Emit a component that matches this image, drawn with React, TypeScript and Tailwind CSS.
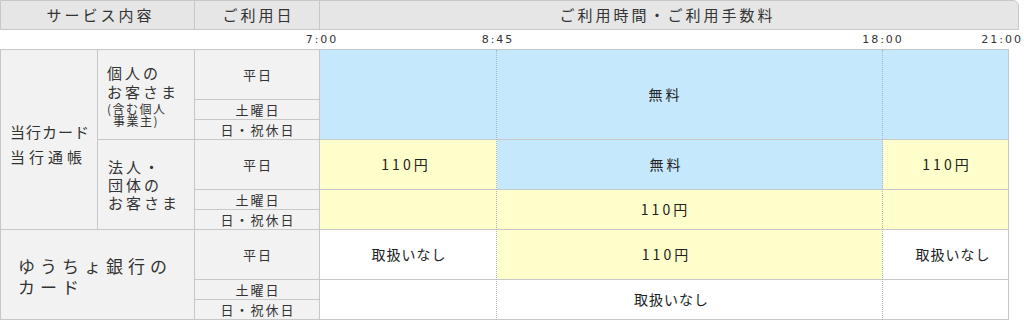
import React from 'react';

const jp = "font-['Noto_Sans_CJK_JP',sans-serif]";
const label = 'bg-[#f2f2f2] border-r border-b border-[#c8c8c8] text-[#333]';
const dayCell = `${label} flex items-center justify-center text-[13px] tracking-[2px] pl-[2px]`;
const timeCell = 'border-b border-[#c8c8c8] flex items-center justify-center text-[#222]';
const fee = 'text-[14px] tracking-[3px] pl-[3px]';
const none = 'text-[14px] tracking-[1px] pl-[1px]';

const blue = 'bg-[#c6e8fd]';
const yellow = 'bg-[#ffffcb]';

const App: React.FC = () => {
  return (
    <div className={`w-[1024px] h-[320px] bg-white overflow-hidden ${jp}`}>
      {/* header */}
      <div className="flex w-[1019px] h-[30px] bg-[#e6e6e6] border border-[#c8c8c8] rounded-tr-[6px] text-[15px] tracking-[3px] text-[#333]">
        <div className="w-[194px] border-r border-[#c8c8c8] flex items-center justify-center pl-[6px]">サービス内容</div>
        <div className="w-[125px] border-r border-[#c8c8c8] flex items-center justify-center pl-[3px]">ご利用日</div>
        <div className="flex-1 flex items-center justify-center pr-[3px]">ご利用時間・ご利用手数料</div>
      </div>

      {/* time ruler */}
      <div className="relative h-[19px] font-['DejaVu_Sans',sans-serif] text-[11px] tracking-[2px] text-[#333] leading-[19px]">
        <span className="absolute left-[322px] top-0 -translate-x-1/2">7:00</span>
        <span className="absolute left-[498px] top-0 -translate-x-1/2">8:45</span>
        <span className="absolute left-[883px] top-0 -translate-x-1/2">18:00</span>
        <span className="absolute right-[1px] top-0">21:00</span>
      </div>

      {/* body */}
      <div className="relative w-[1009px] border-t border-l border-[#c8c8c8] grid grid-cols-[97px_97px_125px_177px_386px_126px] grid-rows-[50px_20px_20px_50px_20px_20px_50px_20px_20px]">
        <div className={`${label} col-start-1 row-start-1 row-span-6 flex flex-col justify-center pl-[9px] pt-[9px] text-[15px] leading-[25px]`}>
          <span className="tracking-[1px]">当行カード</span>
          <span className="tracking-[4px]">当行通帳</span>
        </div>

        <div className={`${label} col-start-2 row-start-1 row-span-3 flex flex-col justify-center pl-[9px]`}>
          <span className="text-[15px] tracking-[3px] leading-[19px]">個人の</span>
          <span className="text-[15px] tracking-[3px] leading-[19px]">お客さま</span>
          <span className="text-[12px] tracking-[1.5px] leading-[12px] mt-[2px]">(含む個人</span>
          <span className="text-[12px] tracking-[1.5px] leading-[12px] pl-[6px]">事業主)</span>
        </div>

        <div className={`${label} col-start-2 row-start-4 row-span-3 flex flex-col justify-center pl-[10px] pt-[1px] text-[15px] tracking-[3px] leading-[18px]`}>
          <span>法人・</span>
          <span>団体の</span>
          <span>お客さま</span>
        </div>

        <div className={`${label} col-start-1 col-span-2 row-start-7 row-span-3 flex flex-col justify-center pl-[17px] pt-[2px] text-[17px] tracking-[5px] leading-[21px]`}>
          <span>ゆうちょ銀行の</span>
          <span>カード</span>
        </div>

        {/* days */}
        <div className={`${dayCell} col-start-3 row-start-1`}>平日</div>
        <div className={`${dayCell} col-start-3 row-start-2`}>土曜日</div>
        <div className={`${dayCell} col-start-3 row-start-3`}>日・祝休日</div>
        <div className={`${dayCell} col-start-3 row-start-4`}>平日</div>
        <div className={`${dayCell} col-start-3 row-start-5`}>土曜日</div>
        <div className={`${dayCell} col-start-3 row-start-6`}>日・祝休日</div>
        <div className={`${dayCell} col-start-3 row-start-7`}>平日</div>
        <div className={`${dayCell} col-start-3 row-start-8`}>土曜日</div>
        <div className={`${dayCell} col-start-3 row-start-9`}>日・祝休日</div>

        {/* fees */}
        <div className={`${timeCell} ${blue} col-start-4 col-span-3 row-start-1 row-span-3 border-r`}>
          <span className={fee}>無料</span>
        </div>

        <div className={`${timeCell} ${yellow} col-start-4 row-start-4`}>
          <span className={`${fee} mr-[8px]`}>110円</span>
        </div>
        <div className={`${timeCell} ${blue} col-start-5 row-start-4`}>
          <span className={`${fee} mr-[50px]`}>無料</span>
        </div>
        <div className={`${timeCell} ${yellow} col-start-6 row-start-4 border-r`}>
          <span className={fee}>110円</span>
        </div>

        <div className={`${timeCell} ${yellow} col-start-4 col-span-3 row-start-5 row-span-2 border-r`}>
          <span className={fee}>110円</span>
        </div>

        <div className={`${timeCell} bg-white col-start-4 row-start-7`}>
          <span className={none}>取扱いなし</span>
        </div>
        <div className={`${timeCell} ${yellow} col-start-5 row-start-7`}>
          <span className={`${fee} mr-[50px]`}>110円</span>
        </div>
        <div className={`${timeCell} bg-white col-start-6 row-start-7 border-r`}>
          <span className={`${none} ml-[14px]`}>取扱いなし</span>
        </div>

        <div className={`${timeCell} bg-white col-start-4 col-span-3 row-start-8 row-span-2 border-r`}>
          <span className={`${none} ml-[14px]`}>取扱いなし</span>
        </div>

        {/* dotted time markers */}
        <div className="absolute top-0 bottom-0 left-[495px] w-0 border-l border-dotted border-[#a9b9c4]" />
        <div className="absolute top-0 bottom-0 left-[881px] w-0 border-l border-dotted border-[#a9b9c4]" />
      </div>
    </div>
  );
};

export default App;
